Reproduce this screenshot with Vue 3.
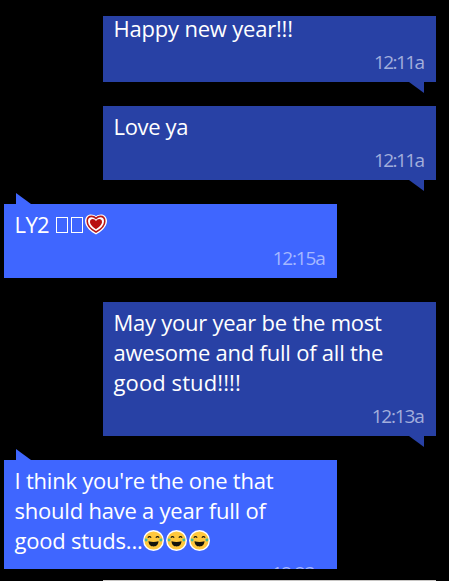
<template>
  <div class="thread">
    <div
      v-for="message in messages"
      :key="message.id"
      class="bubble"
      :class="[message.from, message.crop]"
    >
      <svg class="tail" width="15" height="11" viewBox="0 0 15 11">
        <path v-if="message.from === 'sent'" d="M0 0H15V11Z" />
        <path v-else d="M0 0V11H15Z" />
      </svg>
      <div class="text">
        <div
          v-for="(line, index) in message.lines"
          :key="index"
          class="line"
          :style="{ letterSpacing: line.spacing + 'px' }"
        >
          <span>{{ line.text }}</span>
          <span v-for="n in line.boxes || 0" :key="'box' + n" class="missing"></span>
          <svg v-if="line.heart" class="heart" width="22" height="21" viewBox="0 0 22 21">
            <path class="heart-edge" d="M11 20.5C7 18.5 0 13.5 0 7C0 3 2.8 .4 6 .4C8.2 .4 10 1.2 11 2.2C12 1.2 13.8 .4 16 .4C19.2 .4 22 3 22 7C22 13.5 15 18.5 11 20.5Z" />
            <path class="heart-ring" d="M11 18C7 15.8 2.2 12 2.2 7.2C2.2 4.2 4.2 2.4 6.6 2.4C8.6 2.4 10 3.4 11 4.4C12 3.4 13.4 2.4 15.4 2.4C17.8 2.4 19.8 4.2 19.8 7.2C19.8 12 15 15.8 11 18Z" />
            <path class="heart-core" d="M11 15.2C8.5 13.4 5 10.8 5 7.9C5 6 6.2 5.1 7.6 5.1C9.2 5.1 10.3 6 11 7.2C11.7 6 12.8 5.1 14.4 5.1C15.8 5.1 17 6 17 7.9C17 10.8 13.5 13.4 11 15.2Z" />
          </svg>
          <svg
            v-for="n in line.faces || 0"
            :key="'face' + n"
            class="face"
            width="21"
            height="21"
            viewBox="0 0 21 21"
          >
            <circle cx="10.5" cy="10.5" r="10.5" fill="#fff" />
            <circle cx="10.5" cy="10.5" r="9.1" fill="#ffc83d" />
            <path d="M4.8 7.6Q6.5 5.6 8.2 7.6M12.8 7.6Q14.5 5.6 16.2 7.6" fill="none" stroke="#15150c" stroke-width="1.1" />
            <path d="M5.5 11.2Q10.5 12.8 15.5 11.2C15.3 14.8 13.2 16.4 10.5 16.4S5.7 14.8 5.5 11.2Z" fill="#15150c" />
            <path d="M1.7 8.6L4.6 8.8Q4.8 11.4 3.1 11.6Q1.5 11.4 1.7 8.6ZM19.3 8.6L16.4 8.8Q16.2 11.4 17.9 11.6Q19.5 11.4 19.3 8.6Z" fill="#45b99b" />
          </svg>
        </div>
      </div>
      <div class="time" :style="{ letterSpacing: message.timeSpacing + 'px' }">{{ message.time }}</div>
    </div>
    <div class="composer"></div>
  </div>
</template>

<script setup>
const messages = [
  {
    id: 1,
    from: 'sent',
    crop: 'crop-top',
    lines: [{ text: 'Happy new year!!!', spacing: -0.2 }],
    time: '12:11a',
    timeSpacing: -1.6
  },
  {
    id: 2,
    from: 'sent',
    lines: [{ text: 'Love ya', spacing: -0.35 }],
    time: '12:11a',
    timeSpacing: -1.6
  },
  {
    id: 3,
    from: 'received',
    lines: [{ text: 'LY2 ', spacing: -0.6, boxes: 2, heart: true }],
    time: '12:15a',
    timeSpacing: -1.2
  },
  {
    id: 4,
    from: 'sent',
    lines: [
      { text: 'May your year be the most', spacing: -0.25 },
      { text: 'awesome and full of all the', spacing: -0.22 },
      { text: 'good stud!!!!', spacing: 0.1 }
    ],
    time: '12:13a',
    timeSpacing: -1.2
  },
  {
    id: 5,
    from: 'received',
    crop: 'crop-bottom',
    lines: [
      { text: "I think you're the one that", spacing: -0.22 },
      { text: 'should have a year full of', spacing: -0.22 },
      { text: 'good studs...', spacing: -0.2, faces: 3 }
    ],
    time: '12:23a',
    timeSpacing: -1.2
  }
]
</script>

<style>
body {
  margin: 0;
  background: #000;
}
</style>

<style scoped>
.thread {
  box-sizing: border-box;
  width: 449px;
  height: 581px;
  padding: 16px 13px 0 4px;
  display: flex;
  flex-direction: column;
  gap: 24px;
  overflow: hidden;
  background: #000;
  font-family: 'Open Sans', 'Noto Sans', sans-serif;
}

.bubble {
  position: relative;
  box-sizing: border-box;
  flex: none;
  width: 333px;
  padding: 5px 12.5px 6px 10.5px;
  color: #fff;
}

.sent {
  align-self: flex-end;
  background: #2841a5;
}

.received {
  align-self: flex-start;
  background: #3f66ff;
}

.tail {
  position: absolute;
  display: block;
}

.sent .tail {
  right: 12px;
  bottom: -11px;
  fill: #2841a5;
}

.received .tail {
  top: -11px;
  left: 12px;
  fill: #3f66ff;
}

.line {
  display: flex;
  height: 30px;
  font-size: 22px;
  line-height: 30px;
  white-space: pre;
}

.time {
  height: 33px;
  font-size: 19px;
  line-height: 38px;
  text-align: right;
  color: #a2aedc;
}

.received .time {
  color: #a5b8ff;
}

.crop-top {
  height: 66px;
  padding-top: 0;
}

.crop-top .text {
  margin-top: -3px;
}

.crop-bottom {
  height: 109px;
}

/* only the tops of the digits clear the lower edge */
.crop-bottom .time {
  height: 14px;
  margin-right: 1px;
  line-height: 37px;
  overflow: hidden;
}

.missing {
  box-sizing: border-box;
  width: 12px;
  height: 16px;
  margin: 8px 0 0 2px;
  border: 1px solid #fff;
}

.missing + .missing {
  margin-left: 3px;
}

.heart {
  margin: 5px 0 0 2px;
}

.heart-edge {
  fill: #fff;
}

.heart-ring {
  fill: #fff;
  stroke: #b91919;
  stroke-width: 1.6;
}

.heart-core {
  fill: #b91111;
}

.face {
  margin: 5px 2px 0 0;
}

.composer {
  flex: none;
  align-self: flex-end;
  width: 333px;
  height: 1px;
  margin-top: -13px;
  background: #c8c6c4;
}
</style>
